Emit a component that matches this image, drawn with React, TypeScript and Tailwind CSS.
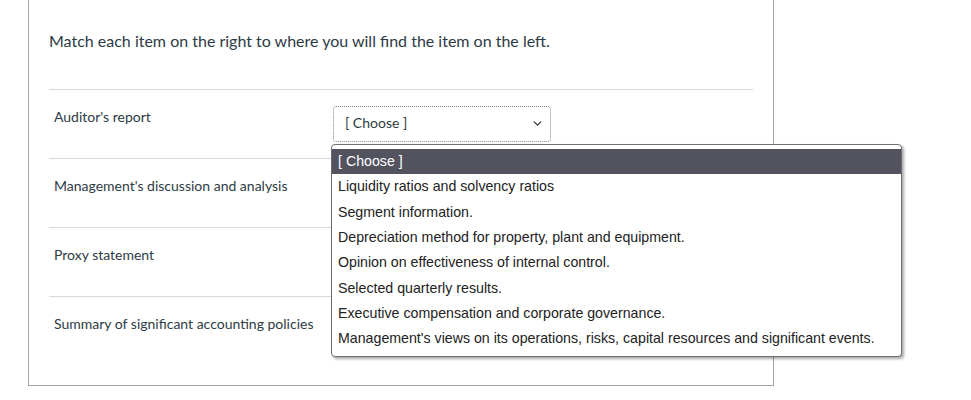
import { ChevronDown } from "lucide-react";

const rows = [
  "Auditor's report",
  "Management's discussion and analysis",
  "Proxy statement",
  "Summary of significant accounting policies",
];

const options = [
  "[ Choose ]",
  "Liquidity ratios and solvency ratios",
  "Segment information.",
  "Depreciation method for property, plant and equipment.",
  "Opinion on effectiveness of internal control.",
  "Selected quarterly results.",
  "Executive compensation and corporate governance.",
  "Management's views on its operations, risks, capital resources and significant events.",
];

const App = () => {
  return (
    <div className="min-h-screen bg-white font-['Lato','Liberation_Sans',sans-serif] text-[#2d3b45]">
      {/* Question box */}
      <div className="ml-[28px] w-[746px] border-x border-b border-[#a5a5a5] px-5 pb-5">
        <div className="pt-[29px] pb-[36px] text-base leading-6">
          Match each item on the right to where you will find the item on the left.
        </div>

        {rows.map((label, i) => (
          <div key={i} className="flex h-[69px] border-t border-[#d7dadc]">
            <div className="w-[284px] pl-[5px] pt-[17px] text-sm leading-5">{label}</div>
            {i === 0 && (
              <div className="relative pt-[16px]">
                {/* Focused select */}
                <div className="flex h-[36px] w-[218px] items-center justify-between rounded-[3px] border border-dotted border-[#8a8a8a] pb-[2px] pl-[11px] pr-[6px] text-sm">
                  <span>[ Choose ]</span>
                  <ChevronDown size={13} strokeWidth={2.2} className="text-[#333]" />
                </div>

                {/* Open options list */}
                <div className="absolute left-[-2px] top-[54px] z-10 w-[571px] rounded-[4px] border border-[#6e6e6e] bg-white pt-[4px] pb-[4px] font-['Liberation_Sans',Arial,sans-serif] text-[14.2px] text-[#222] shadow-[2px_2px_3px_rgba(0,0,0,0.35)]">
                  {options.map((opt, j) => (
                    <div
                      key={j}
                      className={`flex h-[25.33px] items-center whitespace-nowrap pl-[6px] ${j === 0 ? "bg-[#53535f] text-white" : ""}`}
                    >
                      {opt}
                    </div>
                  ))}
                </div>
              </div>
            )}
          </div>
        ))}
      </div>
    </div>
  );
};

export default App;
